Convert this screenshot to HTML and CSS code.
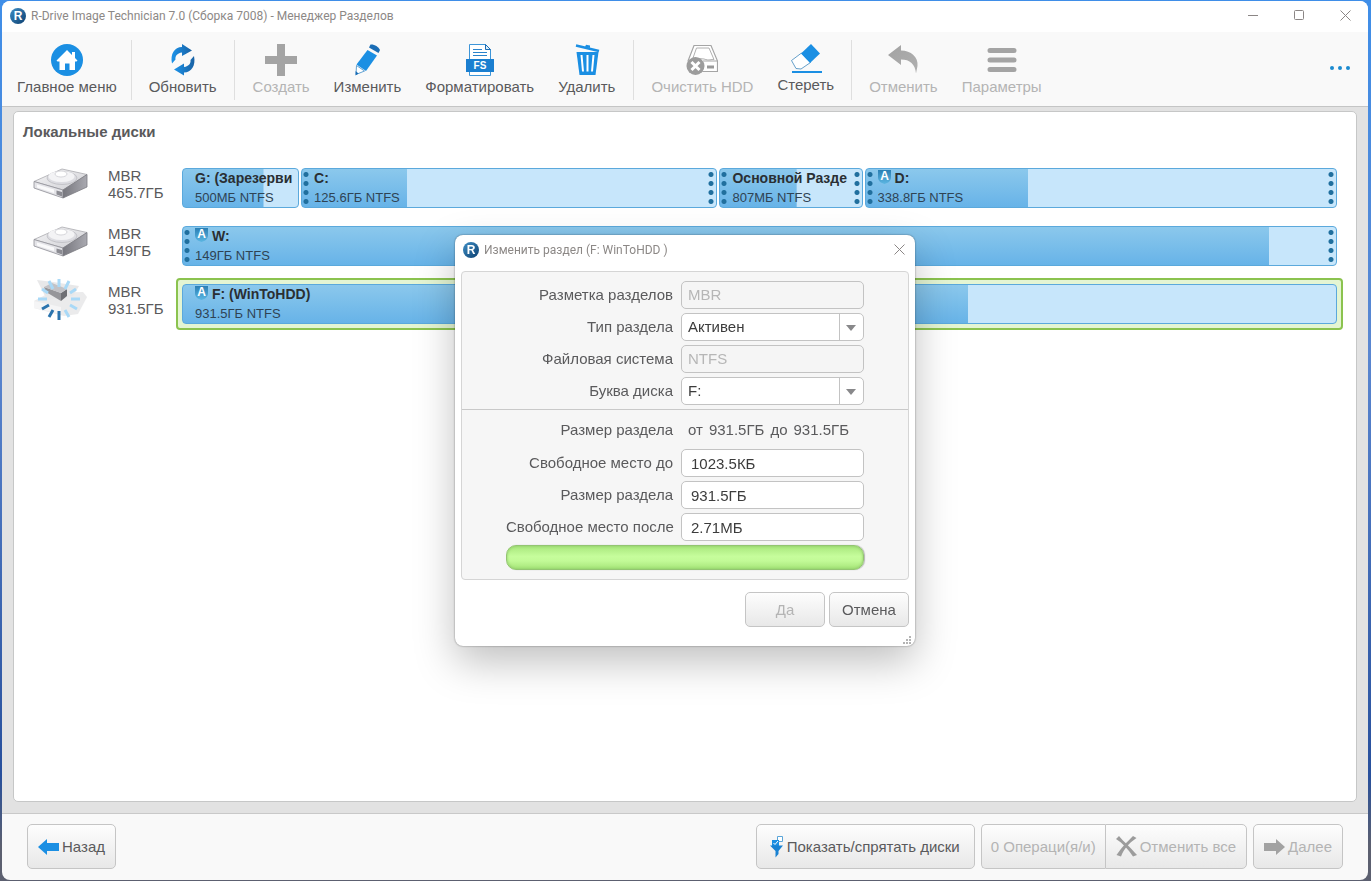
FILE: index.html
```html
<!DOCTYPE html>
<html lang="ru">
<head>
    <meta charset="UTF-8">
    <meta name="viewport" content="width=device-width, initial-scale=1.0">
    <title>R-Drive Image Technician - Менеджер Разделов</title>
    <link rel="stylesheet" href="styles.css">
</head>
<body>
    <!-- shared symbols -->
    <svg class="symbols" aria-hidden="true">
        <defs>
            <linearGradient id="logoFill" x1="0" y1="0" x2="1" y2="1">
                <stop offset="0" stop-color="#3f8fc6"/>
                <stop offset="1" stop-color="#0c3f70"/>
            </linearGradient>
            <linearGradient id="refreshFill" x1="0" y1="0" x2="1" y2="0">
                <stop offset="0" stop-color="#1b93ea"/>
                <stop offset="1" stop-color="#1a62a4"/>
            </linearGradient>
            <linearGradient id="undoFill" x1="0" y1="0" x2="1" y2="1">
                <stop offset="0" stop-color="#a2a2a2"/>
                <stop offset="1" stop-color="#b0b0b0"/>
            </linearGradient>
            <linearGradient id="driveTop" x1="0" y1="0" x2="1" y2="1">
                <stop offset="0" stop-color="#f6f6f7"/>
                <stop offset="1" stop-color="#cfcfd4"/>
            </linearGradient>
            <linearGradient id="driveSide" x1="0" y1="0" x2="1" y2="0">
                <stop offset="0" stop-color="#77777e"/>
                <stop offset="1" stop-color="#a9a9b0"/>
            </linearGradient>
            <linearGradient id="shieldFill" x1="0" y1="0" x2="0" y2="1">
                <stop offset="0" stop-color="#2a7fb4"/>
                <stop offset="1" stop-color="#5cb6e2"/>
            </linearGradient>
        </defs>
        <symbol id="drive" viewBox="0 0 56 52">
            <path d="M1 19.500 29 7 54 12.500 30 28Z" fill="url(#driveTop)" stroke="#a9a9ae" stroke-width=".8"/>
            <path d="M1 19.500 30 28V36L1 26Z" fill="#e4e4e8" stroke="#8e8e95" stroke-width=".8"/>
            <path d="M30 28 54 12.500V25L30 36Z" fill="url(#driveSide)" stroke="#7c7c83" stroke-width=".8"/>
            <ellipse cx="29" cy="16" rx="15" ry="6.500" fill="#dcdce1" stroke="#bcbcc2" stroke-width=".8"/>
            <ellipse cx="28.500" cy="14.500" rx="13" ry="5.500" fill="#f3f3f5"/>
            <ellipse cx="28" cy="12" rx="6" ry="3" fill="#fff" stroke="#cdcdd2" stroke-width=".8"/>
            <path d="M4 22.500 21 27.500V31L4 25.500Z" fill="#fafafb"/>
            <path d="M23.500 28.500 29 30V34.500L23.500 32.500Z" fill="#8b8b92"/>
        </symbol>
        <symbol id="cross" viewBox="0 0 11 11">
            <path d="M.5.500 10.500 10.500M10.500.500.500 10.500" stroke="#8b8685" stroke-width="1" fill="none"/>
        </symbol>
    </svg>

    <div class="window">
        <header class="titlebar">
            <svg class="logo" viewBox="0 0 16 16"><circle cx="8" cy="8" r="8" fill="url(#logoFill)"/><text x="8" y="12" text-anchor="middle">R</text></svg>
            <h1 class="title">R-Drive Image Technician 7.0 (Сборка 7008) - Менеджер Разделов</h1>
            <div class="window-controls">
                <button class="control" aria-label="Свернуть"><svg width="11" height="11"><path d="M0 5.500H10" stroke="#8b8685"/></svg></button>
                <button class="control" aria-label="Развернуть"><svg width="11" height="11"><rect x=".5" y=".5" width="9" height="9" rx="1" fill="none" stroke="#8b8685"/></svg></button>
                <button class="control" aria-label="Закрыть"><svg width="11" height="11"><use href="#cross"/></svg></button>
            </div>
        </header>

        <nav class="toolbar">
            <div class="tool-group">
                <button class="tool">
                    <svg viewBox="0 0 32 32"><circle cx="16" cy="16" r="16" fill="#1b8fe3"/><path d="M16 6 21 11V8H24V14L26.500 16.500 25.500 17.500H24V26H18.500V19.500H14V26H8.500V17.500H6.500L5.500 16.500Z" fill="#fff"/></svg>
                    Главное меню
                </button>
            </div>
            <div class="tool-group">
                <button class="tool">
                    <svg viewBox="0 0 32 32"><path d="M5 19.500C3 10 7.500 3 15 3V0L25 6.500 15 12V8.500C10 9 8 12.500 8.500 15.500Z" fill="url(#refreshFill)"/><path d="M27 12C29 21.500 24.500 28.500 17 28.500V31.500L7 25.500 17 19.500V23C22 22.500 24 19 23.500 16Z" fill="url(#refreshFill)"/></svg>
                    Обновить
                </button>
            </div>
            <div class="tool-group">
                <button class="tool" disabled>
                    <svg viewBox="0 0 32 32"><path d="M12 0H20V12H32V20H20V32H12V20H0V12H12Z" fill="#a4a4a4"/></svg>
                    Создать
                </button>
                <button class="tool">
                    <svg viewBox="0 0 32 32"><path d="M19.500.500C23 0 27.500 2.500 29 6L27.500 9 18 3.500Z" fill="#1a6db5"/><path d="M16.500 6 26 11.500 15 27 5.500 20.500Z" fill="#1b8fe3"/><path d="M5.500 21.500 13.500 27 5 30.500Z" fill="#fff" stroke="#3a8ac6" stroke-width=".8"/><path d="M4.700 27 7.500 29.500 4.500 31.500Z" fill="#1a6db5"/></svg>
                    Изменить
                </button>
                <button class="tool">
                    <svg viewBox="0 0 32 32"><path d="M5.500.500H21.500L26.500 5.500V31.500H5.500Z" fill="#fff" stroke="#3d95d8"/><path d="M21.500.500V5.500H26.500Z" fill="#dcedf9" stroke="#1a6db5"/><path d="M9 5.500H18M9 8.500H23M9 11.500H23" stroke="#2a83cc"/><rect x="2" y="15" width="28" height="13" fill="#1b7fd0"/><text x="16" y="25" text-anchor="middle" class="fs-letters">FS</text></svg>
                    Форматировать
                </button>
                <button class="tool">
                    <svg viewBox="0 0 32 32"><path d="M5 1.500 28 7" stroke="#1b8fe3" stroke-width="2.400"/><path d="M14 3 15 .8 19 1.600V4" fill="#1b8fe3"/><path d="M5.500 8H27.500L24.500 31H8.500Z" fill="#1b8fe3"/><path d="M10.500 11 12 27.500M16.500 11V27.500M22.500 11 21 27.500" stroke="#fff" stroke-width="2"/></svg>
                    Удалить
                </button>
            </div>
            <div class="tool-group">
                <button class="tool" disabled>
                    <svg viewBox="0 0 32 32"><path d="M8 1.500H25L31.500 17V27.500H17L2 17Z" fill="#fff" stroke="#a5a5a5" stroke-width="1.200"/><path d="M10.500 4H23L28 15.500C25 15 23.500 17 18 15L7 14Z" fill="none" stroke="#b0b0b0"/><path d="M17 17H31.500" stroke="#a5a5a5"/><path d="M21 23H28" stroke="#999" stroke-width="3"/><circle cx="9.500" cy="22" r="9" fill="#9c9c9c"/><path d="M5.500 18 13.500 26M13.500 18 5.500 26" stroke="#fff" stroke-width="3"/></svg>
                    Очистить HDD
                </button>
                <button class="tool tool-flat">
                    <svg viewBox="0 0 32 30"><path d="M1.500 16.500 11.500 9 20.500 18.500 11 25 6 24.500Z" fill="#fff" stroke="#3f88bd" stroke-width=".8"/><path d="M11 9.500 21 0 30 9.500 20 19Z" fill="#1b8fe3"/><path d="M2 28H32" stroke="#1b8fe3" stroke-width="2"/></svg>
                    Стереть
                </button>
            </div>
            <div class="tool-group">
                <button class="tool" disabled>
                    <svg viewBox="0 0 32 32"><path d="M1 11 14 1V6.500C24 6.500 31.500 13 30.500 22L29 29.500C28 20 23 15.500 14 15.500V21Z" fill="url(#undoFill)"/></svg>
                    Отменить
                </button>
                <button class="tool" disabled>
                    <svg viewBox="0 0 32 32"><path d="M4 6.500H28M4 16H28M4 25.500H28" stroke="#a4a4a4" stroke-width="5" stroke-linecap="round"/></svg>
                    Параметры
                </button>
            </div>
            <button class="more" aria-label="Ещё"><svg width="20" height="4"><circle cx="2" cy="2" r="2"/><circle cx="10" cy="2" r="2"/><circle cx="18" cy="2" r="2"/></svg></button>
        </nav>

        <main class="content">
            <section class="panel">
                <h2>Локальные диски</h2>
                <div class="disks">
                    <div class="disk">
                        <svg class="disk-icon"><use href="#drive"/></svg>
                        <div class="disk-info">MBR<br>465.7ГБ</div>
                        <div class="partitions" style="--sizes: 117fr 416fr 143fr 472fr">
                            <div class="partition" style="--used: 70%">
                                <strong>G: (Зарезерви</strong>
                                <span>500МБ NTFS</span>
                            </div>
                            <div class="partition grip-left grip-right" style="--used: 25.4%">
                                <strong>C:</strong>
                                <span>125.6ГБ NTFS</span>
                            </div>
                            <div class="partition grip-left grip-right" style="--used: 54%">
                                <strong>Основной Разде</strong>
                                <span>807МБ NTFS</span>
                            </div>
                            <div class="partition grip-left grip-right" style="--used: 34.5%">
                                <strong><svg class="shield" viewBox="0 0 13 15"><path d="M0 1H13V8C13 12 10 14 6.500 15 3 14 0 12 0 8Z" fill="url(#shieldFill)"/><text x="6.500" y="11" text-anchor="middle">A</text></svg>D:</strong>
                                <span>338.8ГБ NTFS</span>
                            </div>
                        </div>
                    </div>
                    <div class="disk">
                        <svg class="disk-icon"><use href="#drive"/></svg>
                        <div class="disk-info">MBR<br>149ГБ</div>
                        <div class="partitions">
                            <div class="partition grip-left grip-right" style="--used: 94.2%">
                                <strong><svg class="shield" viewBox="0 0 13 15"><path d="M0 1H13V8C13 12 10 14 6.500 15 3 14 0 12 0 8Z" fill="url(#shieldFill)"/><text x="6.500" y="11" text-anchor="middle">A</text></svg>W:</strong>
                                <span>149ГБ NTFS</span>
                            </div>
                        </div>
                    </div>
                    <div class="disk selected">
                        <!-- busy drive: faded body with a spinner over it -->
                        <svg class="disk-icon" viewBox="0 0 56 52">
                            <g opacity=".5">
                                <path d="M1 23 16 15 50 14 54 19 45 36 31 38 1 30Z" fill="#d8d8da"/>
                                <path d="M4 2 20 4 46 8 40 18 14 22Z" fill="#d2d2d5"/>
                                <path d="M1 23 28 29V36L1 30Z" fill="#ececee"/>
                            </g>
                            <path d="M11 9 28 15V23L13 14Z" fill="#96969a"/>
                            <path d="M28 15 34 11V18L28 23Z" fill="#6f6f74"/>
                            <path d="M11 9 19 5 34 11 28 15Z" fill="#c2c2c6"/>
                            <g stroke="#a9d9f7" stroke-width="3">
                                <path d="M26 9V1M32 11 36 3M37 15 43 11M38 21H47M37 27 44 31M32 32 36 39M14 21H5M15 15 9 11M20 11 16 3"/>
                            </g>
                            <path d="M26 33V42M20 32 16 39M16 27 9 31" stroke="#2b74ae" stroke-width="3"/>
                        </svg>
                        <div class="disk-info">MBR<br>931.5ГБ</div>
                        <div class="partitions">
                            <div class="partition" style="--used: 68.1%">
                                <strong><svg class="shield" viewBox="0 0 13 15"><path d="M0 1H13V8C13 12 10 14 6.500 15 3 14 0 12 0 8Z" fill="url(#shieldFill)"/><text x="6.500" y="11" text-anchor="middle">A</text></svg>F: (WinToHDD)</strong>
                                <span>931.5ГБ NTFS</span>
                            </div>
                        </div>
                    </div>
                </div>
            </section>
        </main>

        <footer class="footer">
            <button class="button">
                <svg width="21" height="16"><path d="M0 8 9 0V4H21V12H9V16Z" fill="#1b8fe3"/></svg>Назад
            </button>
            <div class="footer-actions">
                <button class="button button-filter">
                    <svg width="15" height="22"><path d="M8.500.500H13.500V5.500H8.500Z" fill="#fff" stroke="#5aa5d8"/><rect x="3" y="4" width="7" height="6" fill="#1b8fe3"/><path d="M4.500 7 6 8.500 9 5" stroke="#fff" fill="none"/><path d="M1 9.500H14L9.500 15V18L6.500 21.500V15Z" fill="#1a82d2"/></svg>Показать/спрятать диски
                </button>
                <div class="button-group">
                    <button class="button" disabled>0 Операци(я/и)</button>
                    <button class="button" disabled>
                        <svg width="21" height="21"><path d="M3 0C8 6 14 11 21 19L17 20.500C12 13 7 7.500 0 3ZM17 0 20.500 2C12 8 8 13 5 20.500L.5 19C6 11 11 6 17 0Z" fill="#9c9c9c"/></svg>Отменить все
                    </button>
                </div>
                <button class="button" disabled>
                    <svg width="21" height="16"><path d="M21 8 12 0V4H0V12H12V16Z" fill="#a2a2a2"/></svg>Далее
                </button>
            </div>
        </footer>
    </div>

    <div class="overlay">
        <form class="dialog" role="dialog" aria-labelledby="dialogTitle">
            <div class="dialog-title">
                <svg class="logo" viewBox="0 0 16 16"><circle cx="8" cy="8" r="8" fill="url(#logoFill)"/><text x="8" y="12" text-anchor="middle">R</text></svg>
                <span id="dialogTitle" class="title">Изменить раздел (F: WinToHDD )</span>
                <button type="button" class="dialog-close" aria-label="Закрыть"><svg width="11" height="11"><use href="#cross"/></svg></button>
            </div>
            <div class="dialog-body">
                <div class="fields">
                    <label for="scheme">Разметка разделов</label>
                    <input type="text" id="scheme" value="MBR" disabled>
                    <label for="type">Тип раздела</label>
                    <div class="select">
                        <select id="type"><option>Активен</option></select>
                    </div>
                    <label for="fs">Файловая система</label>
                    <input type="text" id="fs" value="NTFS" disabled>
                    <label for="letter">Буква диска</label>
                    <div class="select">
                        <select id="letter"><option>F:</option></select>
                    </div>
                </div>
                <div class="fields">
                    <span class="range-label">Размер раздела</span>
                    <span class="range"><span>от</span><span>931.5ГБ</span><span>до</span><span>931.5ГБ</span></span>
                    <label for="before">Свободное место до</label>
                    <input type="text" id="before" class="size" value="1023.5КБ">
                    <label for="size">Размер раздела</label>
                    <input type="text" id="size" class="size" value="931.5ГБ">
                    <label for="after">Свободное место после</label>
                    <input type="text" id="after" class="size" value="2.71МБ">
                    <div class="size-bar"></div>
                </div>
            </div>
            <div class="dialog-actions">
                <button type="button" class="button" disabled>Да</button>
                <button type="button" class="button">Отмена</button>
            </div>
            <svg class="resize-grip" width="8" height="8" aria-hidden="true"><path d="M6 0H8V2H6ZM6 3H8V5H6ZM3 3H5V5H3ZM6 6H8V8H6ZM3 6H5V8H3ZM0 6H2V8H0Z" fill="#b4b4b4"/></svg>
        </form>
    </div>
</body>
</html>
```

FILE: styles.css
```css
* {
    box-sizing: border-box;
}
body {
    margin: 0;
    padding: 1px 3px 1px 2px;
    height: 100vh;
    background: linear-gradient(#3f8ee8, #5a86d0 40%, #28509c 88%, #5c6070 96%);
    font-family: "Liberation Sans", Arial, sans-serif;
    font-size: 15px;
    color: #5a5a5c;
}
button, input, select {
    font: inherit;
    color: inherit;
}
button {
    margin: 0;
    padding: 0;
    border: none;
    background: none;
}
h1, h2 {
    margin: 0;
}
.symbols {
    position: absolute;
    width: 0;
    height: 0;
}
.window {
    display: flex;
    flex-direction: column;
    height: 100%;
    border-radius: 8px;
    background: #f9f9f9;
    overflow: hidden;
}

/* title bar */
.titlebar {
    display: flex;
    align-items: center;
    height: 31px;
    padding: 0 0 2px 8px;
    background: #fff;
}
.logo {
    width: 16px;
    height: 16px;
    margin-right: 5px;
}
.logo text {
    font: bold 12px "Liberation Sans", sans-serif;
    fill: #fff;
}
.title {
    flex: 1;
    font-family: Roboto, "Noto Sans", sans-serif;
    font-size: 12px;
    font-weight: 400;
    color: #8c8886;
}
.window-controls {
    display: flex;
}
.control {
    width: 46px;
    height: 28px;
}

/* toolbar */
.toolbar {
    display: flex;
    align-items: flex-start;
    height: 75px;
    padding-top: 8px;
    border-bottom: 1px solid #c4c5c5;
}
.tool-group {
    display: flex;
    height: 60px;
    padding: 0 5px;
    border-right: 1px solid #dfdfdf;
}
.tool-group:first-child {
    padding: 0 2px 0 3px;
}
.tool-group:nth-child(3) {
    padding: 0 6px;
}
.tool-group:last-of-type {
    border-right: none;
}
.tool {
    display: flex;
    flex-direction: column;
    align-items: center;
    gap: 2px;
    padding: 4px 12px 0;
    line-height: 18px;
    white-space: nowrap;
}
.tool svg {
    width: 32px;
    height: 32px;
}
.tool-flat svg {
    height: 30px;
}
.tool:disabled, .button:disabled {
    color: #b4b4b4;
}
.more {
    height: 40px;
    margin: 8px 18px 0 auto;
}
.more svg {
    display: block;
    fill: #1b8bd0;
}

/* disk list */
.content {
    flex: 1;
    display: flex;
    padding: 4px 11px 11px;
    background: #e2e2e2;
}
.panel {
    flex: 1;
    padding: 10px 13px 10px 9px;
    border: 1px solid #c6c7c7;
    border-radius: 5px;
    background: #fff;
}
.panel h2 {
    margin-bottom: 20px;
    font-size: 15px;
    line-height: 20px;
}
.disks {
    display: flex;
    flex-direction: column;
    gap: 6px;
}
.disk {
    display: flex;
    padding-left: 10px;
}
.disk-icon {
    width: 56px;
    height: 52px;
}
.disk-info {
    width: 87px;
    padding: 5px 0 0 19px;
    line-height: 17px;
}
.partitions {
    flex: 1;
    display: grid;
    grid-template-columns: var(--sizes, 1fr);
    gap: 2px;
    padding: 4px;
    border: 2px solid transparent;
    border-radius: 4px;
}
.selected .partitions {
    border-color: #8bc34f;
    background: #e4f5d3;
}
.partition {
    position: relative;
    min-width: 0;
    padding: 0 3px 0 12px;
    border: 1px solid #5ba9dc;
    border-radius: 4px;
    background: linear-gradient(#8bc8ec, #67b3e8) no-repeat 0 0 / var(--used) 100%, #c7e6fb;
    font-size: 13px;
    line-height: 19px;
    color: #2f4353;
}
.partition strong, .partition span {
    display: block;
    overflow: hidden;
    white-space: nowrap;
}
.partition strong {
    font-size: 14px;
    color: #2a2f33;
}
.partition.grip-right {
    padding-right: 10px;
}
.grip-left::before, .grip-right::after {
    content: "";
    position: absolute;
    top: 1px;
    width: 6px;
    height: 36px;
    background: radial-gradient(circle, #206f9e 2px, transparent 3px) 0 0 / 6px 9px;
}
.grip-left::before {
    left: 1px;
}
.grip-right::after {
    right: 2px;
}
.shield {
    width: 13px;
    height: 15px;
    margin-right: 4px;
    vertical-align: top;
}
.shield text {
    font: bold 12px "Liberation Sans", sans-serif;
    fill: #fff;
}
.fs-letters {
    font: bold 10px "Liberation Sans", sans-serif;
    fill: #fff;
}

/* footer */
.footer {
    display: flex;
    align-items: flex-start;
    justify-content: space-between;
    height: 67px;
    padding: 10px 25px 0;
    border-top: 1px solid #c9c9c9;
}
.footer-actions, .button-group {
    display: flex;
}
.footer-actions {
    gap: 6px;
}
.button {
    display: flex;
    align-items: center;
    justify-content: center;
    gap: 3px;
    border: 1px solid #c5c5c5;
    border-radius: 5px;
    background: linear-gradient(#fdfdfd, #e8e8e8);
    white-space: nowrap;
}
.footer .button {
    height: 45px;
    padding: 0 10px;
}
.footer .button-filter {
    padding: 0 14px 0 12px;
}
.button-group .button:first-child {
    padding: 0 9px;
    border-radius: 5px 0 0 5px;
    border-right: none;
}
.button-group .button:last-child {
    border-radius: 0 5px 5px 0;
}

/* dialog */
.overlay {
    position: fixed;
    inset: 0 1px 0 0;
    display: flex;
    align-items: center;
    justify-content: center;
}
.dialog {
    position: relative;
    width: 460px;
    padding: 0 6px 19px;
    border-radius: 8px;
    background: #fff;
    box-shadow: 0 0 2px rgba(0, 0, 0, 0.5), 0 16px 40px rgba(0, 0, 0, 0.25);
}
.dialog-title {
    display: flex;
    align-items: center;
    height: 36px;
    padding: 0 4px 7px 2px;
}
.dialog-close {
    height: 20px;
}
.dialog-body {
    border: 1px solid #d5d5d5;
    border-radius: 4px;
    background: #f6f6f6;
}
.fields {
    display: grid;
    grid-template-columns: 167px 183px;
    justify-content: center;
    align-items: center;
    gap: 4px 8px;
    padding: 9px 0 4px;
}
.fields + .fields {
    padding: 5px 0 9px;
    border-top: 1px solid #c9c9c9;
}
.fields label, .range-label {
    text-align: right;
    white-space: nowrap;
}
.fields label {
    padding-bottom: 2px;
}
.fields input, .select select {
    width: 100%;
    height: 28px;
    padding: 0 6px 2px;
    border: 1px solid #c3c3c3;
    border-radius: 5px;
    background: #fff;
    color: #3c3c3c;
}
.fields input:disabled {
    background: #f5f5f5;
    color: #b6b6b6;
}
.fields .size {
    padding: 0 9px;
}
.select {
    position: relative;
}
.select select {
    display: block;
    appearance: none;
}
.select::before, .select::after {
    content: "";
    position: absolute;
    pointer-events: none;
}
.select::before {
    top: 1px;
    bottom: 1px;
    right: 24px;
    border-left: 1px solid #c3c3c3;
}
.select::after {
    top: 12px;
    right: 8px;
    border: 5px solid transparent;
    border-top: 6px solid #88888a;
    border-bottom: none;
}
.range {
    display: flex;
    align-items: center;
    gap: 6px;
    height: 30px;
    padding: 0 0 2px 7px;
}
.range-label {
    line-height: 30px;
}
.size-bar {
    grid-column: 1 / 3;
    height: 25px;
    border: 1px solid #93c571;
    border-radius: 10px;
    background: linear-gradient(#a9e77d, #c6fd9c 45%, #c2fa97 65%, #a5e578);
    box-shadow: inset 0 0 3px #8cc466, 1px 0 1px #b5b5b5;
}
.dialog-actions {
    display: flex;
    justify-content: flex-end;
    gap: 4px;
    margin-top: 12px;
}
.dialog-actions .button {
    width: 80px;
    height: 35px;
}
.resize-grip {
    position: absolute;
    right: 4px;
    bottom: 2px;
}
```
